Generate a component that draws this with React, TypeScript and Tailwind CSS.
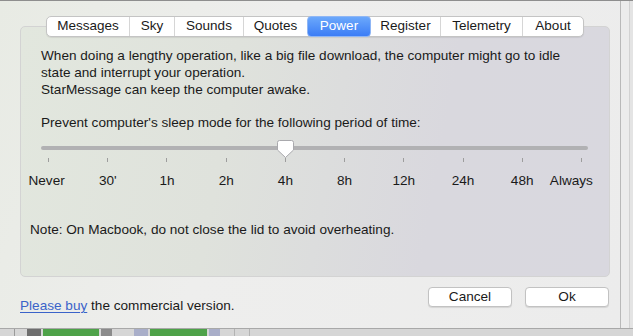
import React from "react";

const tabs = [
  { label: "Messages", w: 83 },
  { label: "Sky", w: 45 },
  { label: "Sounds", w: 69 },
  { label: "Quotes", w: 63 },
  { label: "Power", w: 64 },
  { label: "Register", w: 70 },
  { label: "Telemetry", w: 82 },
  { label: "About", w: 60 },
];

const stops = ["Never", "30'", "1h", "2h", "4h", "8h", "12h", "24h", "48h", "Always"];

// Small pentagon knob of the macOS ticked slider
function Knob() {
  return (
    <svg width="19" height="20" viewBox="0 0 19 20" className="absolute left-[235px] top-[-1px]">
      <path
        d="M3.5 1.5 H15.5 Q17.5 1.5 17.5 3.5 V11 L9.5 18.5 L1.5 11 V3.5 Q1.5 1.5 3.5 1.5 Z"
        fill="#ffffff"
        stroke="#a9a9ad"
        strokeWidth="1"
      />
    </svg>
  );
}

export default function App() {
  return (
    <div
      className="w-[633px] h-[336px] overflow-hidden bg-[#e4e4e4] text-[13.6px] text-[#1a1a1a]"
      style={{ fontFamily: '"Liberation Sans", Arial, sans-serif' }}
    >
      <div className="h-px bg-[#8e8e8e]" />
      <div className="flex h-[327px]">
        {/* window */}
        <div className="w-[621px] border-r border-[#b9b9b9] bg-[linear-gradient(110deg,#e8ebe4_0%,#eeeeed_40%,#ececec_100%)] flex flex-col">
          <div className="pt-[15px] pl-[20px] pr-[10px] flex flex-col">
            {/* tab bar */}
            <div className="relative z-10 self-center flex h-[21px] rounded-[5px] border border-[#c4c4c4] bg-white text-[13.5px] shadow-[0_1px_1px_rgba(0,0,0,0.08)]">
              {tabs.map((t, i) => (
                <div
                  key={t.label}
                  style={{ width: t.w }}
                  className={
                    t.label === "Power"
                      ? "flex items-center justify-center -my-px rounded-[4px] bg-[linear-gradient(#6ba8fb,#3c7df6)] text-white border border-[#8fb6f5]"
                      : i < tabs.length - 1 && tabs[i + 1].label !== "Power"
                      ? "flex items-center justify-center border-r border-[#d6d6d6]"
                      : "flex items-center justify-center"
                  }
                >
                  {t.label}
                </div>
              ))}
            </div>

            {/* group box */}
            <div className="-mt-[11px] h-[251px] rounded-[5px] border border-[#d3d3d3] bg-[linear-gradient(100deg,#e2e7de_0%,#dfe2dc_35%,#d9d8de_70%,#d9d8df_100%)] px-[20px] pt-[20px]">
              <p className="leading-[17px]">
                When doing a lengthy operation, like a big file download, the computer might go to idle
                <br />
                state and interrupt your operation.
                <br />
                StarMessage can keep the computer awake.
              </p>
              <p className="mt-[16px] leading-[17px]">
                Prevent computer's sleep mode for the following period of time:
              </p>

              {/* slider */}
              <div className="relative mt-[9px] h-[18px]">
                <div className="absolute left-0 right-[1px] top-[6px] h-[4px] rounded-full bg-[#b1b1b3]" />
                <Knob />
              </div>
              <div className="flex justify-between px-[7px]">
                {stops.map((s) => (
                  <div key={s} className="w-px h-[4px] bg-[#9d9d9d]" />
                ))}
              </div>
              <div className="grid grid-cols-10 -mx-[22px] mt-[11px] leading-[16px]">
                {stops.map((s, i) => (
                  <div
                    key={s}
                    className={
                      i === 0
                        ? "text-center -translate-x-[2px]"
                        : i === 9
                        ? "text-center -translate-x-[10px]"
                        : "text-center"
                    }
                  >
                    {s}
                  </div>
                ))}
              </div>

              <p className="mt-[32px] -ml-[11px] leading-[17px]">
                Note: On Macbook, do not close the lid to avoid overheating.
              </p>
            </div>
          </div>

          {/* footer */}
          <div className="flex items-start mt-[10px] pl-[20px] pr-[11px]">
            <p className="flex-1 mt-[10px] leading-[17px]">
              <span className="text-[#3a63c9] underline underline-offset-2">Please buy</span> the commercial
              version.
            </p>
            <button className="w-[84px] h-[20px] rounded-[4px] border border-[#c2c2c2] bg-white shadow-[0_1px_1px_rgba(0,0,0,0.1)] leading-none">
              Cancel
            </button>
            <button className="ml-[13px] w-[84px] h-[20px] rounded-[4px] border border-[#c2c2c2] bg-white shadow-[0_1px_1px_rgba(0,0,0,0.1)] leading-none">
              Ok
            </button>
          </div>
        </div>
        <div className="flex-1 bg-[#ececec] border-r border-[#d2d2d2] mr-[3px]" />
      </div>

      {/* desktop behind the window */}
      <div className="flex h-[8px] border-t border-[#a8a8a8] bg-[#d6d6d6]">
        <div className="w-[14px]" />
        <div className="w-px bg-[#9a9a9a]" />
        <div className="w-[12px]" />
        <div className="w-[14px] bg-[#6e6e6e]" />
        <div className="w-[2px]" />
        <div className="w-[56px] bg-[#4ea249]" />
        <div className="w-[2px]" />
        <div className="w-[11px] bg-[#8b8b8b]" />
        <div className="w-[22px]" />
        <div className="w-[14px] bg-[#a9aec9]" />
        <div className="w-[2px]" />
        <div className="w-[57px] bg-[#4ea249]" />
        <div className="w-[2px]" />
        <div className="w-[11px] bg-[#a9aec9]" />
        <div className="w-[14px]" />
        <div className="w-px bg-[#b3b3b3]" />
        <div className="w-[14px]" />
        <div className="w-px bg-[#b3b3b3]" />
      </div>
    </div>
  );
}
